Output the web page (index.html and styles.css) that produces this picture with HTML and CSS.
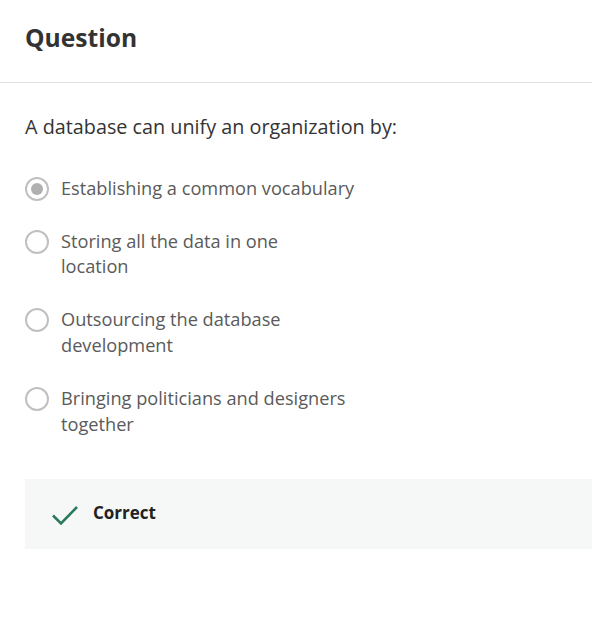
FILE: index.html
```html
<!DOCTYPE html>
<html>
<head>
<meta charset="utf-8">
<link rel="stylesheet" href="styles.css">
</head>
<body>
<div class="header"><h1 class="title">Question</h1></div>
<div class="content">
  <p class="prompt">A database can unify an organization by:</p>
  <div class="options">
    <div class="option"><span class="radio checked"></span><span class="label">Establishing a common vocabulary</span></div>
    <div class="option"><span class="radio"></span><span class="label">Storing all the data in one<br>location</span></div>
    <div class="option"><span class="radio"></span><span class="label">Outsourcing the database<br>development</span></div>
    <div class="option"><span class="radio"></span><span class="label">Bringing politicians and designers<br>together</span></div>
  </div>
  <div class="feedback">
    <svg class="check" width="28" height="22" viewBox="0 0 28 22"><path d="M2 11.5 L10 19.5 L26 3" fill="none" stroke="#2a7a5a" stroke-width="2.6"/></svg>
    <span class="fb-text">Correct</span>
  </div>
</div>
</body>
</html>
```
FILE: styles.css
```css
html, body { margin: 0; padding: 0; background: #fff; }
body { font-family: "Open Sans", "Liberation Sans", sans-serif; color: #333; }
.header { height: 83px; border-bottom: 1px solid #e1e1e1; padding: 0 25px; box-sizing: border-box; }
.title { margin: 0; padding-top: 21px; font-size: 24.6px; font-weight: 700; color: #333; line-height: 34px; }
.content { padding: 0 0 0 25px; }
.prompt { margin: 0; padding-top: 31px; font-size: 19.8px; line-height: 26px; color: #333; }
.options { display: flex; flex-direction: column; gap: 28.3px; margin-top: 36.5px; }
.option { display: flex; align-items: flex-start; gap: 12px; }
.radio { width: 20px; height: 20px; border: 2px solid #c0c0c0; border-radius: 50%; flex: none; display: flex; align-items: center; justify-content: center; margin-top: 0; }
.radio.checked::after { content: ""; width: 12px; height: 12px; border-radius: 50%; background: #b0b0b0; }
.label { font-size: 18.2px; line-height: 25.7px; color: #5a5a5a; margin-top: -1px; }
.feedback { margin-top: 42px; height: 70px; background: #f5f8f7; display: flex; align-items: center; padding-left: 26px; gap: 14px; }
.check { flex: none; margin-top: 2px; }
.fb-text { font-size: 17px; font-weight: 700; color: #222; padding-bottom: 4px; }
```
